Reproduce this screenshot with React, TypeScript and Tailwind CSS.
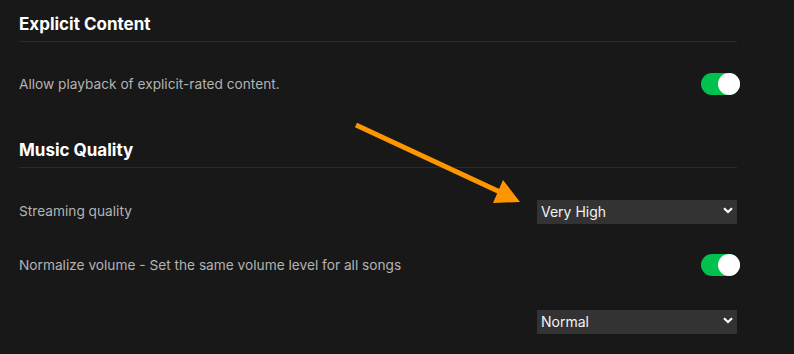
// Settings panel: explicit content + music quality
type SelectProps = { value: string; options: string[] }

function Toggle() {
  return (
    <div className="relative h-[22px] w-[39px] rounded-full bg-[#00c14e]">
      <div className="absolute right-0 top-0 h-[22px] w-[22px] rounded-full bg-white" />
    </div>
  )
}

function Select({ value, options }: SelectProps) {
  return (
    <div className="relative mr-[3px] h-[24px] w-[200px]">
      <select
        defaultValue={value}
        className="h-full w-full appearance-none rounded-none bg-[#333333] pl-[4px] text-[14px] leading-[24px] text-[#f2f2f2] outline-none"
      >
        {options.map((o) => (
          <option key={o}>{o}</option>
        ))}
      </select>
      <svg
        className="pointer-events-none absolute right-[4px] top-[8px]"
        width="10"
        height="7"
        viewBox="0 0 10 7"
      >
        <path d="M1 1.2 L5 5 L9 1.2" stroke="#ffffff" strokeWidth="2.2" fill="none" />
      </svg>
    </div>
  )
}

function Heading({ children }: { children: string }) {
  return (
    <div className="mr-[3px] border-b border-[#2a2a2a] pb-[5px]">
      <h2 className="text-[17px] font-bold leading-[24px] text-white">{children}</h2>
    </div>
  )
}

function Row({ label, children }: { label: string; children: React.ReactNode }) {
  return (
    <div className="flex items-center justify-between">
      <span className="text-[13.7px] text-[#b3b3b3]">{label}</span>
      {children}
    </div>
  )
}

export default function App() {
  const quality = ["Automatic", "Low", "Normal", "High", "Very High"]
  const levels = ["Quiet", "Normal", "Loud"]

  return (
    <div
      className="relative h-[354px] w-[794px] overflow-hidden bg-[#181818]"
      style={{ fontFamily: "Inter, 'Noto Sans', sans-serif" }}
    >
      <div className="flex w-[740px] flex-col pl-[19px] pt-[12px]">
        <Heading>Explicit Content</Heading>
        <div className="mt-[31px] h-[22px]">
          <Row label="Allow playback of explicit-rated content.">
            <Toggle />
          </Row>
        </div>

        <div className="mt-[43px]">
          <Heading>Music Quality</Heading>
        </div>
        <div className="mt-[31px] h-[24px]">
          <Row label="Streaming quality">
            <Select value="Very High" options={quality} />
          </Row>
        </div>
        <div className="mt-[31px] h-[22px]">
          <Row label="Normalize volume - Set the same volume level for all songs">
            <Toggle />
          </Row>
        </div>
        <div className="mt-[33px] flex justify-end">
          <Select value="Normal" options={levels} />
        </div>
      </div>

      {/* annotation arrow */}
      <svg className="pointer-events-none absolute left-0 top-0" width="794" height="354">
        <line x1="356" y1="125" x2="500" y2="192" stroke="#ff9500" strokeWidth="5" />
        <polygon points="503,180 493,203 520,202" fill="#ff9500" />
      </svg>
    </div>
  )
}
